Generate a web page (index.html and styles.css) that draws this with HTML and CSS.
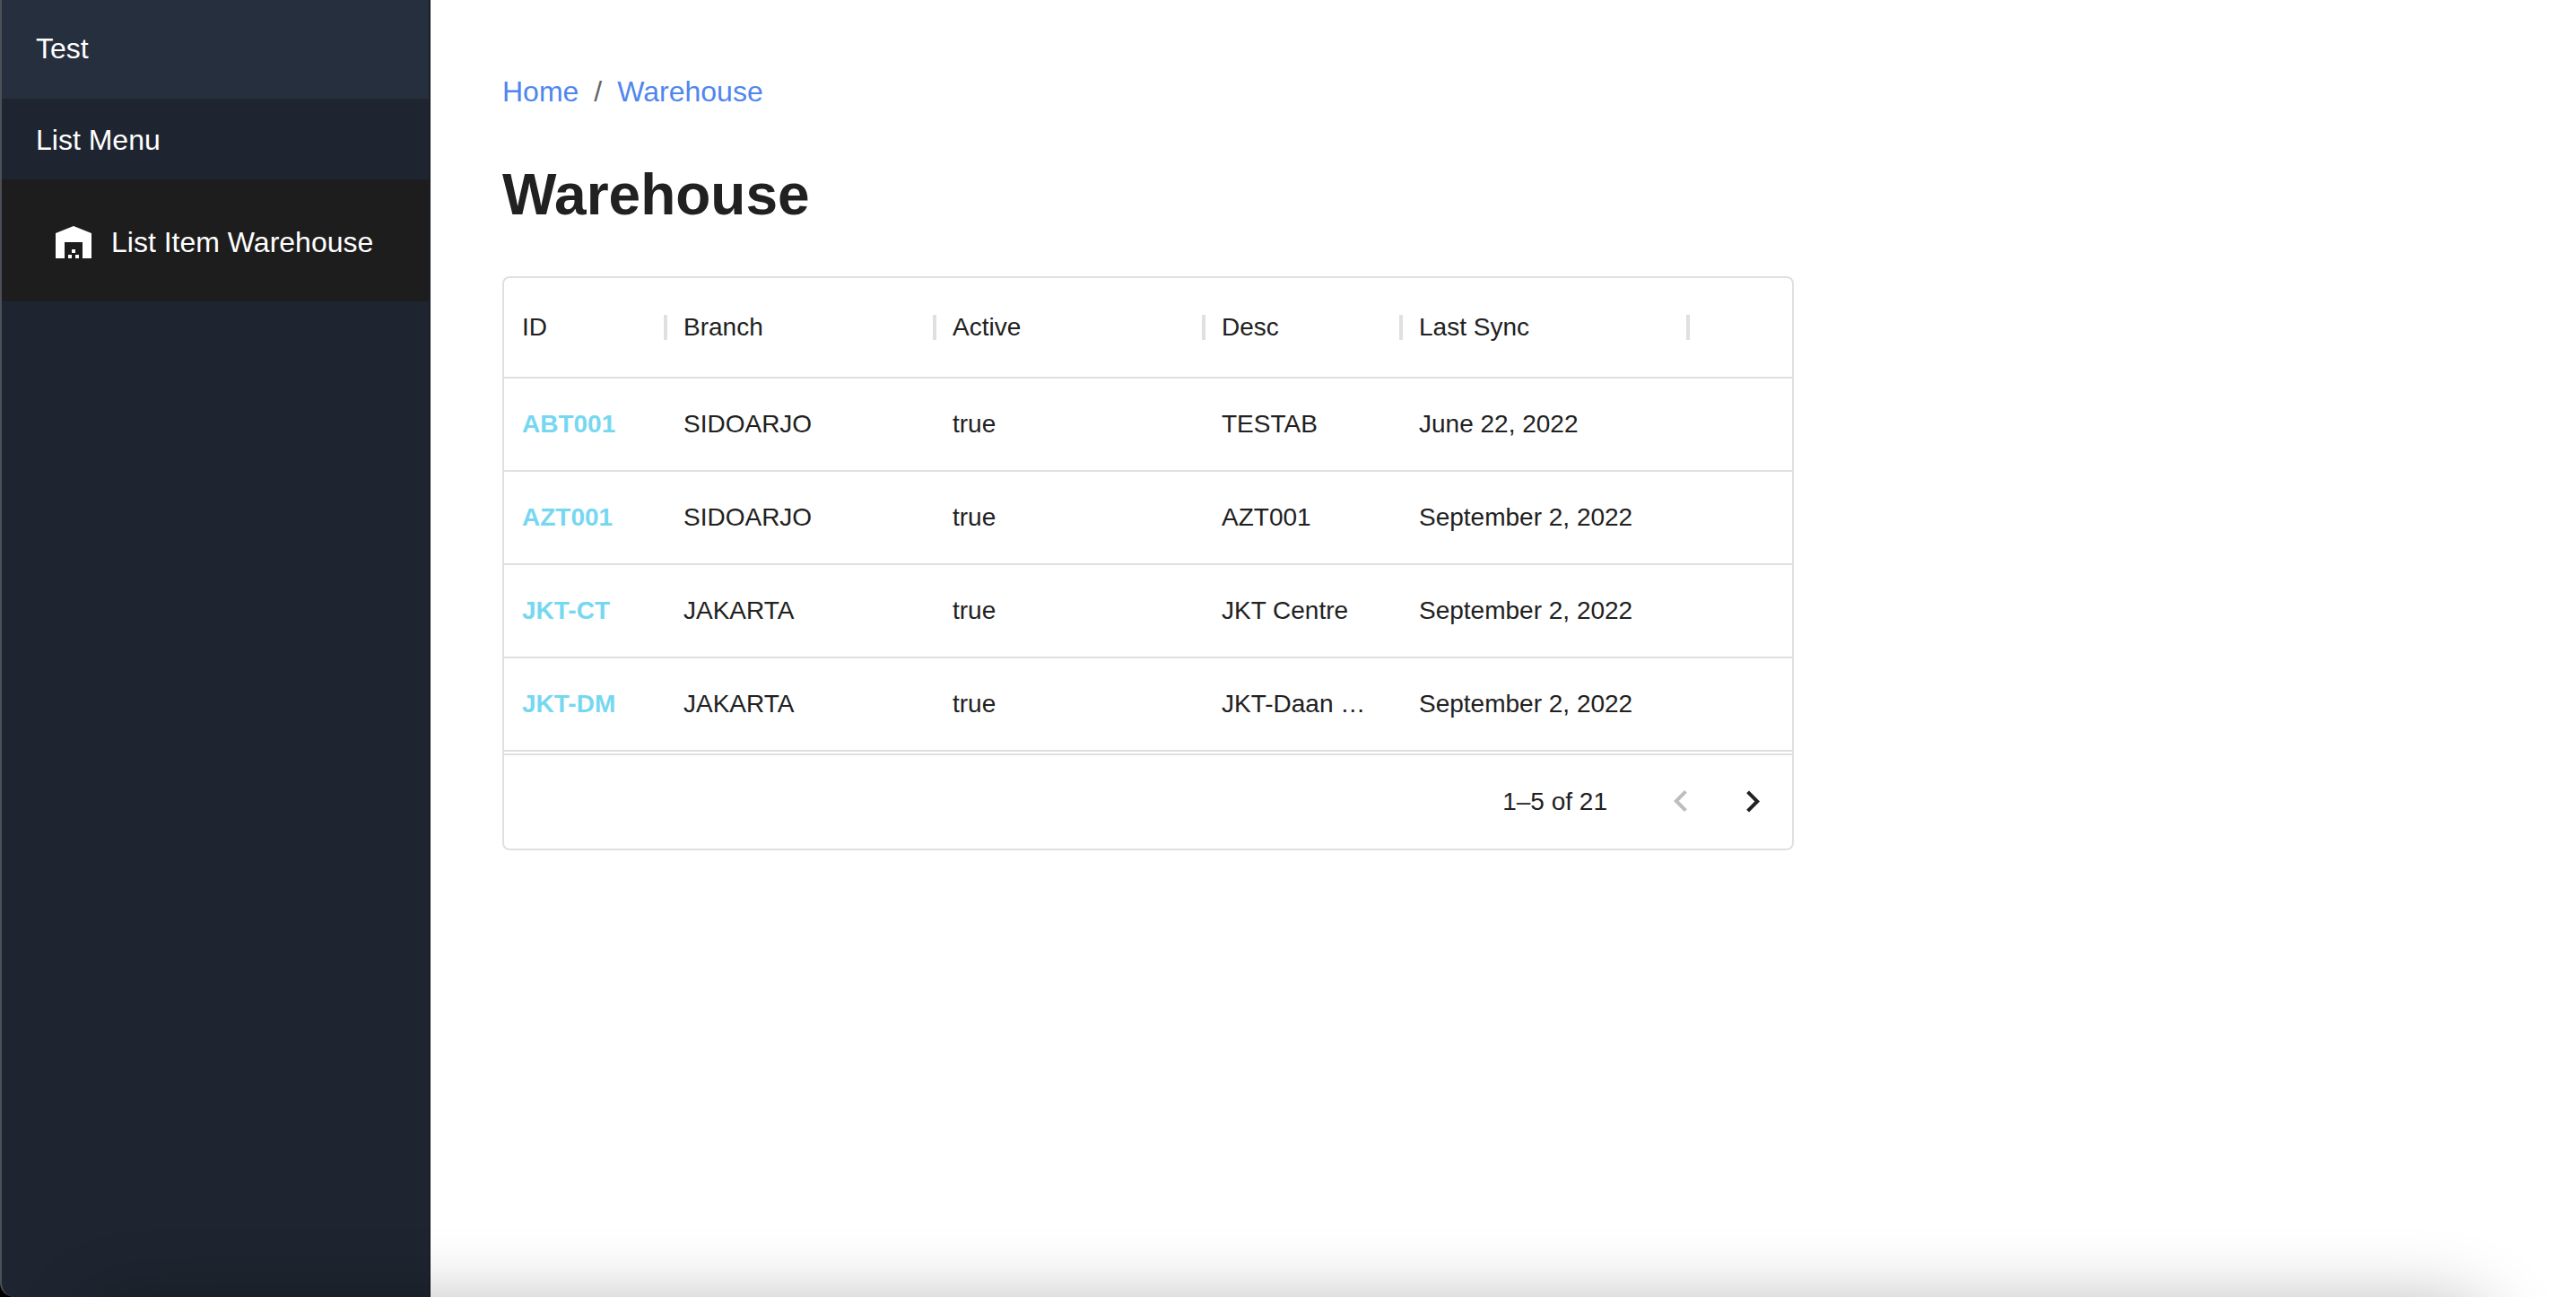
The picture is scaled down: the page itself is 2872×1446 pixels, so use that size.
FILE: index.html
```html
<!DOCTYPE html>
<html lang="en">
<head>
<meta charset="utf-8">
<title>Warehouse</title>
<link rel="stylesheet" href="styles.css">
</head>
<body>
<div class="shell">
  <aside class="sidebar">
    <div class="brand">Test</div>
    <div class="menu-title" id="menu-title">List Menu</div>
    <nav aria-labelledby="menu-title">
      <a class="menu-item" href="#warehouse">
        <svg class="icon" viewBox="0 0 24 24" aria-hidden="true"><path d="M22 21V7L12 3 2 7v14h5v-9h10v9h5zm-11-2H9v2h2v-2zm2-3h-2v2h2v-2zm2 3h-2v2h2v-2z"/></svg>
        <span>List Item Warehouse</span>
      </a>
    </nav>
  </aside>
  <main class="content">
    <nav class="breadcrumbs" aria-label="Breadcrumb">
      <a href="#home">Home</a>
      <span aria-hidden="true">/</span>
      <a href="#warehouse">Warehouse</a>
    </nav>
    <h1 class="title">Warehouse</h1>
    <section class="grid">
      <table class="table">
        <colgroup>
          <col class="col-id"><col class="col-branch"><col class="col-active"><col class="col-desc"><col class="col-sync"><col>
        </colgroup>
        <thead>
          <tr><th scope="col">ID</th><th scope="col">Branch</th><th scope="col">Active</th><th scope="col">Desc</th><th scope="col">Last Sync</th><td></td></tr>
        </thead>
        <tbody>
          <tr><td><a href="#ABT001">ABT001</a></td><td>SIDOARJO</td><td>true</td><td>TESTAB</td><td>June 22, 2022</td><td></td></tr>
          <tr><td><a href="#AZT001">AZT001</a></td><td>SIDOARJO</td><td>true</td><td>AZT001</td><td>September 2, 2022</td><td></td></tr>
          <tr><td><a href="#JKT-CT">JKT-CT</a></td><td>JAKARTA</td><td>true</td><td>JKT Centre</td><td>September 2, 2022</td><td></td></tr>
          <tr><td><a href="#JKT-DM">JKT-DM</a></td><td>JAKARTA</td><td>true</td><td>JKT-Daan …</td><td>September 2, 2022</td><td></td></tr>
        </tbody>
      </table>
      <footer class="pager">
        <span class="range">1–5 of 21</span>
        <button class="page-button" type="button" aria-label="Previous page" disabled>
          <svg class="icon" viewBox="0 0 24 24" aria-hidden="true"><path d="M15.41 16.09l-4.58-4.59 4.58-4.59L14 5.5l-6 6 6 6z"/></svg>
        </button>
        <button class="page-button" type="button" aria-label="Next page">
          <svg class="icon" viewBox="0 0 24 24" aria-hidden="true"><path d="M8.59 16.34l4.58-4.59-4.58-4.59L10 5.75l6 6-6 6z"/></svg>
        </button>
      </footer>
    </section>
  </main>
  <div class="bottom-shade"></div>
</div>
</body>
</html>
```
FILE: styles.css
```css
* { box-sizing: border-box; }

body {
  margin: 0;
  font-family: "Liberation Sans", Helvetica, Arial, sans-serif;
  font-size: 32px;
  line-height: 48px;
  color: #212121;
  background: #000;
}

a { text-decoration: none; }

.shell {
  position: relative;
  display: flex;
  min-height: 100vh;
  overflow: hidden;
}

/* Sidebar */
.sidebar {
  flex: none;
  width: 480px;
  color: #fff;
  background: #1e2530;
  border-left: 2px solid #4b5057;
  border-right: 2px solid #191e27;
  border-bottom-left-radius: 16px;
}

.brand {
  padding: 30px 38px 32px;
  background: #262f3d;
}

.menu-title { padding: 22px 38px 20px; }

.menu-item {
  display: flex;
  align-items: center;
  gap: 18px;
  padding: 46px 36px 42px 56px;
  color: #fff;
  background: #1d1d1d;
}

.icon {
  display: block;
  flex: none;
  width: 48px;
  height: 48px;
  fill: currentColor;
}

/* Main area */
.content {
  flex: 1;
  min-width: 0;
  padding: 78px 80px;
  background: #fff;
}

.breadcrumbs {
  display: flex;
  gap: 17px;
  color: #666;
}

.breadcrumbs a { color: #4f86ee; }

.title {
  margin: 52px 0;
  font-size: 64px;
  line-height: 78px;
  font-weight: 700;
}

.grid {
  max-width: 1440px;
  font-size: 28px;
  line-height: 40px;
  border: 2px solid #e0e0e0;
  border-radius: 8px;
}

.table {
  width: 100%;
  table-layout: fixed;
  border-collapse: separate;
  border-spacing: 0;
}

.col-id { width: 180px; }
.col-branch, .col-active { width: 300px; }
.col-desc { width: 220px; }
.col-sync { width: 320px; }

.table th,
.table td {
  height: 104px;
  padding: 0 20px;
  font-weight: 400;
  text-align: left;
  white-space: nowrap;
  border-bottom: 2px solid #e0e0e0;
}

.table thead th,
.table thead td { height: 112px; }

.table th { position: relative; }

/* Column divider, centred on the edge between two headers */
.table th::after {
  content: "";
  position: absolute;
  top: calc(50% - 14px);
  right: -2px;
  width: 4px;
  height: 28px;
  background: #e0e0e0;
}

.table a {
  font-weight: 700;
  color: #76d7f1;
}

.pager {
  display: flex;
  align-items: center;
  justify-content: flex-end;
  height: 106px;
  margin-top: 2px;
  padding-right: 4px;
  border-top: 2px solid #e0e0e0;
}

.range { margin-right: 42px; }

.page-button {
  padding: 16px;
  color: #212121;
  background: none;
  border: 0;
}

.page-button:disabled { color: #bdbdbd; }

/* Soft shade along the lower edge of the window */
.bottom-shade {
  position: absolute;
  right: 100px;
  bottom: -112px;
  left: 100px;
  height: 100px;
  border-radius: 40px;
  box-shadow: 0 0 84px rgba(0, 0, 0, 0.32);
  pointer-events: none;
}
```
